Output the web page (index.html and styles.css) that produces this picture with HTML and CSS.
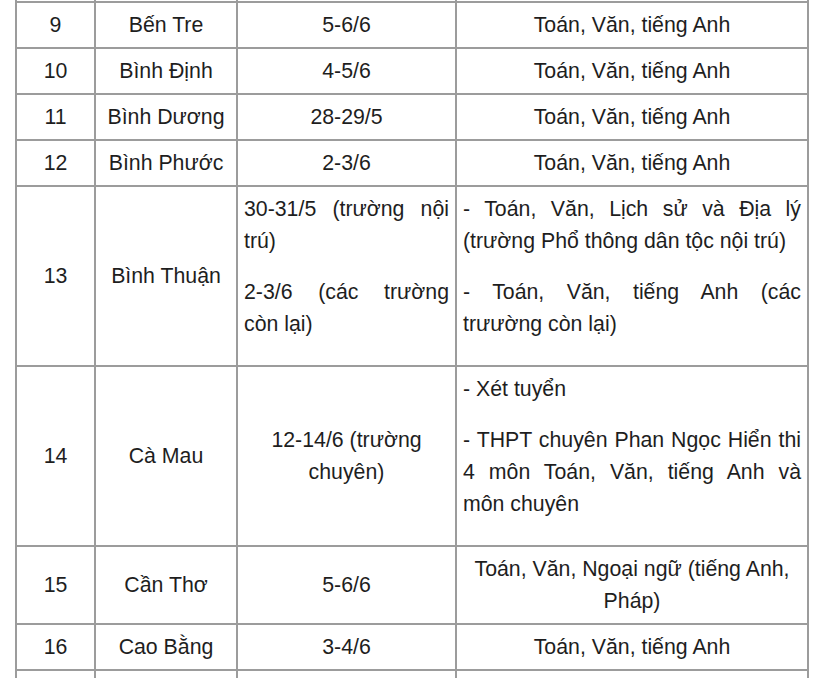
FILE: index.html
```html
<!DOCTYPE html>
<html lang="vi">
<head>
<meta charset="utf-8">
<title>Lịch thi lớp 10</title>
<link rel="stylesheet" href="styles.css">
</head>
<body>
<div class="wrap">
<table class="exam">
  <colgroup>
    <col class="c1"><col class="c2"><col class="c3"><col class="c4">
  </colgroup>
  <tbody>
    <tr><td>&nbsp;</td><td>&nbsp;</td><td>&nbsp;</td><td>&nbsp;</td></tr>
    <tr><td>9</td><td>Bến Tre</td><td>5-6/6</td><td>Toán, Văn, tiếng Anh</td></tr>
    <tr><td>10</td><td>Bình Định</td><td>4-5/6</td><td>Toán, Văn, tiếng Anh</td></tr>
    <tr><td>11</td><td>Bình Dương</td><td>28-29/5</td><td>Toán, Văn, tiếng Anh</td></tr>
    <tr><td>12</td><td>Bình Phước</td><td>2-3/6</td><td>Toán, Văn, tiếng Anh</td></tr>
    <tr>
      <td>13</td>
      <td>Bình Thuận</td>
      <td class="left">
        <p><span class="jl">30-31/5 (trường nội</span>trú)</p>
        <p><span class="jl">2-3/6 (các trường</span>còn lại)</p>
      </td>
      <td class="left">
        <p><span class="jl">- Toán, Văn, Lịch sử và Địa lý</span>(trường Phổ thông dân tộc nội trú)</p>
        <p><span class="jl">- Toán, Văn, tiếng Anh (các</span>trưường còn lại)</p>
      </td>
    </tr>
    <tr>
      <td>14</td>
      <td>Cà Mau</td>
      <td>12-14/6 (trường<br>chuyên)</td>
      <td class="left">
        <p>- Xét tuyển</p>
        <p><span class="jl">- THPT chuyên Phan Ngọc Hiển thi</span><span class="jl">4 môn Toán, Văn, tiếng Anh và</span>môn chuyên</p>
      </td>
    </tr>
    <tr><td>15</td><td>Cần Thơ</td><td>5-6/6</td><td>Toán, Văn, Ngoại ngữ (tiếng Anh,<br>Pháp)</td></tr>
    <tr><td>16</td><td>Cao Bằng</td><td>3-4/6</td><td>Toán, Văn, tiếng Anh</td></tr>
    <tr><td>&nbsp;</td><td>&nbsp;</td><td>&nbsp;</td><td>&nbsp;</td></tr>
  </tbody>
</table>
</div>
</body>
</html>
```
FILE: styles.css
```css
html, body {
  margin: 0;
  padding: 0;
  background: #ffffff;
}

.wrap {
  width: 820px;
  height: 678px;
  overflow: hidden;
}

.exam {
  margin: -45px 0 0 15px;
  border-collapse: collapse;
  table-layout: fixed;
  width: 792px;
  font-family: "Liberation Sans", Arial, sans-serif;
  font-size: 21.3px;
  line-height: 32px;
  color: #1e1e1e;
}

.c1 { width: 79px; }
.c2 { width: 142px; }
.c3 { width: 219px; }
.c4 { width: 352px; }

.exam td {
  border: 2px solid #9c9c9c;
  padding: 6px 6px;
  text-align: center;
  vertical-align: middle;
}

.exam td.left {
  text-align: left;
}

.exam p {
  margin: 0 0 19px;
}

.jl {
  display: block;
  white-space: nowrap;
  text-align: justify;
  text-align-last: justify;
}
```
